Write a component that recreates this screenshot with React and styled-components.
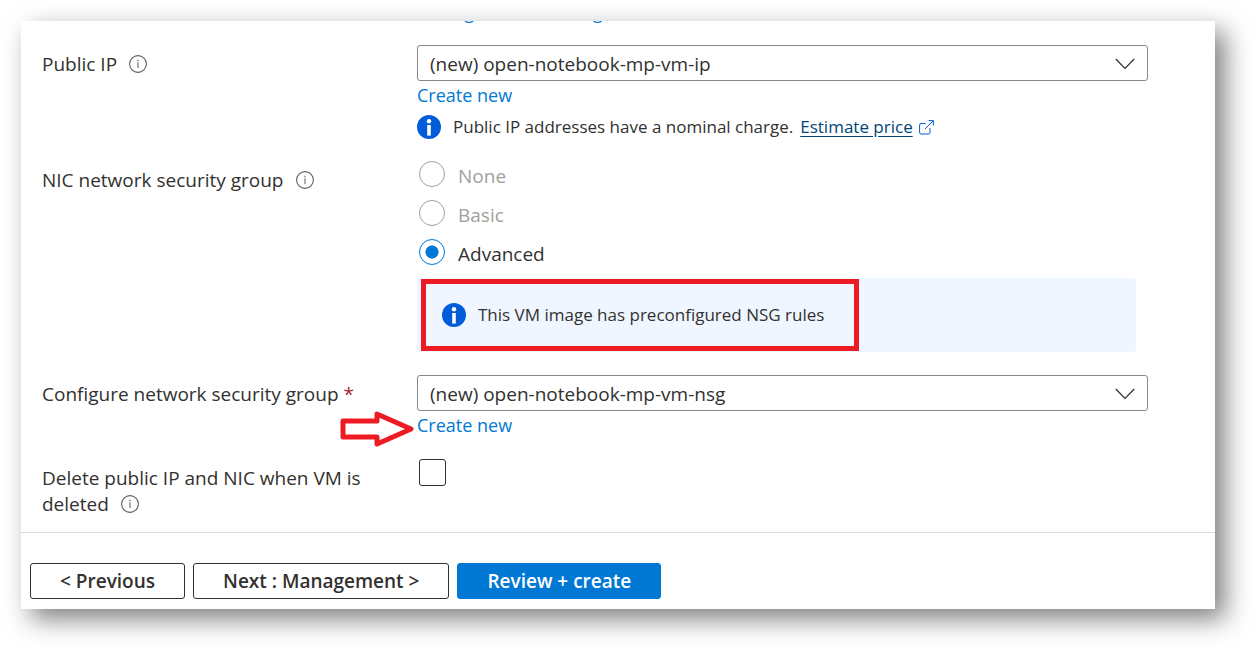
import styled, { createGlobalStyle } from "styled-components"

function InfoIcon() {
    return (
        <HintIcon viewBox="0 0 18 18" aria-hidden="true">
            <circle cx="9" cy="9" r="8.4" fill="none" stroke="#605e5c" strokeWidth="1.1"/>
            <rect x="8.4" y="7.2" width="1.2" height="5.8" fill="#797775"/>
            <rect x="8.3" y="4.8" width="1.4" height="1.3" fill="#797775"/>
        </HintIcon>
    )
}

function InfoBadge() {
    return (
        <BadgeIcon viewBox="0 0 24 24" aria-hidden="true">
            <circle cx="12" cy="12" r="12" fill="#015cda"/>
            <circle cx="12" cy="6.2" r="2.2" fill="#fff"/>
            <rect x="10.2" y="10" width="3.6" height="10.6" fill="#fff"/>
        </BadgeIcon>
    )
}

function Dropdown({ id, value }) {
    return (
        <SelectWrap>
            <Select id={id} defaultValue={value}>
                <option value={value}>{value}</option>
            </Select>
            <Chevron viewBox="0 0 20 12" aria-hidden="true">
                <path d="M0.8 1 L10 10.4 L19.2 1" fill="none" stroke="#323130" strokeWidth="1.3"/>
            </Chevron>
        </SelectWrap>
    )
}

const options = [
    { id: "none", text: "None", disabled: true },
    { id: "basic", text: "Basic", disabled: true },
    { id: "advanced", text: "Advanced", disabled: false },
]

function App() {
    return (
        <>
        <GlobalStyle/>
        <Panel>
            <Form>
                {/* row that is scrolled almost out of the panel */}
                <ScrolledRow>
                    <Link href="#subnet">Manage subnet configuration</Link>
                </ScrolledRow>

                <Row $space={22}>
                    <Label>
                        <label htmlFor="public-ip">Public IP</label>
                        <InfoIcon/>
                    </Label>
                    <Field>
                        <Dropdown id="public-ip" value="(new) open-notebook-mp-vm-ip"/>
                        <Link href="#new-ip">Create new</Link>
                        <Notice>
                            <InfoBadge/>
                            <span>Public IP addresses have a nominal charge.</span>
                            <PriceLink href="#price">Estimate price</PriceLink>
                            <ExternalIcon viewBox="0 0 15 15" aria-hidden="true">
                                <path d="M6.5 3.5 H2 Q0.6 3.5 0.6 4.9 V12.6 Q0.6 14 2 14 H9.6 Q11 14 11 12.6 V8" />
                                <path d="M6 9 L14 1 M9.6 0.6 H14.4 V5.4" />
                            </ExternalIcon>
                        </Notice>
                    </Field>
                </Row>

                <Row $space={22}>
                    <Label id="nsg-label">
                        <span>NIC network security group</span>
                        <InfoIcon/>
                    </Label>
                    <Field>
                        <RadioGroup role="radiogroup" aria-labelledby="nsg-label">
                            {options.map((option) => (
                                <RadioLabel key={option.id} $disabled={option.disabled}>
                                    <Radio
                                        name="nsg"
                                        value={option.id}
                                        disabled={option.disabled}
                                        defaultChecked={option.id === "advanced"}
                                    />
                                    <span>{option.text}</span>
                                </RadioLabel>
                            ))}
                        </RadioGroup>
                        <InfoBox>
                            <InfoBadge/>
                            <span>This VM image has preconfigured NSG rules</span>
                            <Highlight/>
                        </InfoBox>
                    </Field>
                </Row>

                <Row $space={23}>
                    <Label>
                        <label htmlFor="nsg">Configure network security group <Required>*</Required></label>
                    </Label>
                    <Field>
                        <Dropdown id="nsg" value="(new) open-notebook-mp-vm-nsg"/>
                        <Link href="#new-nsg">Create new</Link>
                        <Arrow viewBox="0 0 74 36" aria-hidden="true">
                            <path d="M3 10 H37 V3 L71 18 L37 33 V26 H3 Z"/>
                        </Arrow>
                    </Field>
                </Row>

                <Row $space={20}>
                    <Label>
                        <label htmlFor="delete-ip">Delete public IP and NIC when VM is deleted</label>
                        <InfoIcon/>
                    </Label>
                    <Field>
                        <Checkbox id="delete-ip"/>
                    </Field>
                </Row>
            </Form>

            <Footer>
                <Button>&lt; Previous</Button>
                <Button>Next : Management &gt;</Button>
                <Button $primary>Review + create</Button>
            </Footer>
        </Panel>
        </>
    )
}

export default App

const GlobalStyle = createGlobalStyle`
    *{
        box-sizing: border-box;
    }

    body{
        margin: 0;
        background-color: white;
        color: #323130;
        font-family: "Open Sans", "Noto Sans", sans-serif;
        font-size: 19px;
        line-height: 26px;
    }
`;

const Panel = styled.main`
    margin: 21px 42px 42px 21px;
    background-color: white;
    box-shadow: 10px 10px 24px rgba(0, 0, 0, 0.5);
`;

const Form = styled.form`
    padding: 0 67px 15px 21px;
    border-bottom: 1px solid #dddddd;
`;

const Row = styled.div`
    display: grid;
    grid-template-columns: 375px 1fr;
    margin-top: ${(props) => props.$space}px;
`;

const Label = styled.div`
    padding: 6px 40px 0 0;

    > label, > span{
        margin-right: 12px;
    }
`;

const Field = styled.div`
    position: relative;
    display: flex;
    flex-direction: column;
    align-items: flex-start;
`;

const HintIcon = styled.svg`
    width: 18px;
    height: 18px;
    vertical-align: -2px;
`;

const BadgeIcon = styled.svg`
    flex: none;
    width: 24px;
    height: 24px;
`;

const SelectWrap = styled.div`
    position: relative;
    width: 100%;
`;

const Select = styled.select`
    display: block;
    appearance: none;
    width: 100%;
    height: 36px;
    padding: 1px 48px 0 12px;
    border: 1px solid #8a8886;
    border-radius: 3px;
    background-color: white;
    color: inherit;
    font: inherit;
`;

const Chevron = styled.svg`
    position: absolute;
    top: 13px;
    right: 13px;
    width: 20px;
    height: 12px;
    pointer-events: none;
`;

const Link = styled.a`
    color: #0078d4;
    font-size: 18px;
    line-height: 28px;
    text-decoration: none;
`;

const ScrolledRow = styled.div`
    display: flex;
    align-items: flex-end;
    height: 2px;
    padding-left: 375px;
    overflow: hidden;

    ${Link}{
        line-height: 22px;
    }
`;

const Notice = styled.div`
    display: flex;
    align-items: center;
    margin-top: 6px;
    font-size: 17px;
    line-height: 24px;

    > span{
        margin: 0 7px 0 12px;
    }
`;

const PriceLink = styled.a`
    color: #004578;
    text-underline-offset: 3px;
`;

const ExternalIcon = styled.svg`
    width: 15px;
    height: 15px;
    margin-left: 6px;
    fill: none;
    stroke: #015cda;
`;

const RadioGroup = styled.div`
    display: flex;
    flex-direction: column;
    gap: 13px;
`;

const RadioLabel = styled.label`
    display: flex;
    align-items: center;
    gap: 13px;
    height: 26px;
    padding-left: 2px;
    color: ${(props) => (props.$disabled ? "#a19f9d" : "inherit")};

    > span{
        padding-top: 4px;
    }
`;

const Radio = styled.input.attrs({ type: "radio" })`
    appearance: none;
    width: 26px;
    height: 26px;
    margin: 0;
    border: 1px solid #a19f9d;
    border-radius: 50%;

    &:checked{
        border-color: #0078d4;
        background: radial-gradient(circle, #0078d4 6px, transparent 7px);
    }
`;

const InfoBox = styled.div`
    position: relative;
    display: flex;
    align-items: center;
    gap: 12px;
    align-self: stretch;
    height: 74px;
    margin: 13px 12px 0 0;
    padding-left: 25px;
    border-radius: 3px;
    background-color: #f0f6ff;
    font-size: 17px;
`;

/* red marker drawn over the message */
const Highlight = styled.div`
    position: absolute;
    top: 1px;
    left: 4px;
    width: 438px;
    height: 72px;
    border: 5px solid #ed1c24;
`;

const Required = styled.span`
    color: #a4262c;
`;

const Arrow = styled.svg`
    position: absolute;
    top: 36px;
    left: -77px;
    width: 74px;
    height: 36px;
    fill: none;
    stroke: #ed1c24;
    stroke-width: 5;
    stroke-linejoin: round;
`;

const Checkbox = styled.input.attrs({ type: "checkbox" })`
    appearance: none;
    width: 27px;
    height: 27px;
    margin: 0 0 0 2px;
    border: 1px solid #323130;
    border-radius: 3px;
`;

const Footer = styled.footer`
    display: flex;
    gap: 8px;
    padding: 30px 9px 10px;
`;

const Button = styled.button.attrs({ type: "button" })`
    height: 36px;
    padding: 0 29px;
    border: 1px solid ${(props) => (props.$primary ? "#0078d4" : "#323130")};
    border-radius: 3px;
    background-color: ${(props) => (props.$primary ? "#0078d4" : "white")};
    color: ${(props) => (props.$primary ? "white" : "#323130")};
    font: inherit;
    font-weight: 600;
`;
